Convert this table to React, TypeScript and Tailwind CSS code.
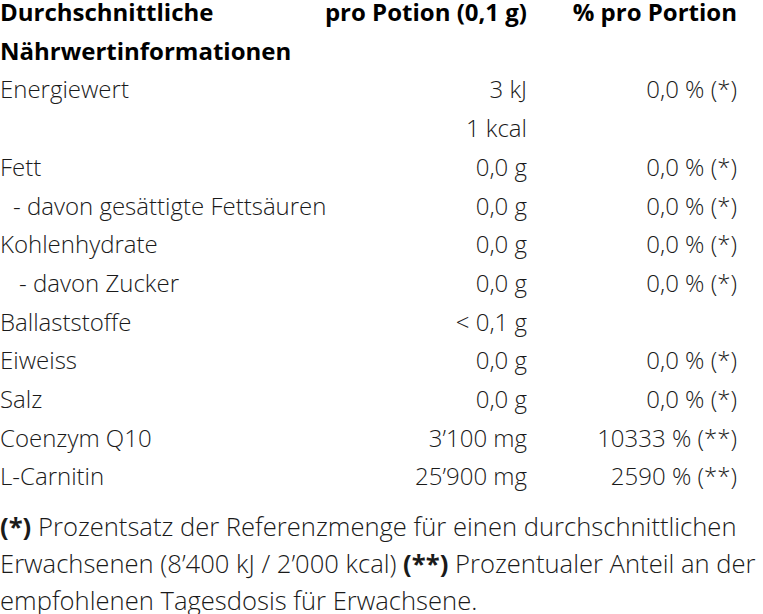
const rows: { label: string; indent?: string; amount: string; amount2?: string; pct: string }[] = [
  { label: "Energiewert", amount: "3 kJ", amount2: "1 kcal", pct: "0,0 % (*)" },
  { label: "Fett", amount: "0,0 g", pct: "0,0 % (*)" },
  { label: "- davon gesättigte Fettsäuren", indent: "pl-[13px]", amount: "0,0 g", pct: "0,0 % (*)" },
  { label: "Kohlenhydrate", amount: "0,0 g", pct: "0,0 % (*)" },
  { label: "- davon Zucker", indent: "pl-[19px]", amount: "0,0 g", pct: "0,0 % (*)" },
  { label: "Ballaststoffe", amount: "< 0,1 g", pct: "" },
  { label: "Eiweiss", amount: "0,0 g", pct: "0,0 % (*)" },
  { label: "Salz", amount: "0,0 g", pct: "0,0 % (*)" },
  { label: "Coenzym Q10", amount: "3’100 mg", pct: "10333 % (**)" },
  { label: "L-Carnitin", amount: "25’900 mg", pct: "2590 % (**)" },
]

export default function App() {
  return (
    <div className="w-[763px] h-[614px] overflow-hidden bg-white text-[#1a1a1a] font-['Open_Sans',sans-serif]">
      <div className="-mt-[7px] grid grid-cols-[330px_197px_210px] text-[24px] leading-[38.7px] font-light">
        {/* Kopfzeile */}
        <div className="font-bold text-black">Durchschnittliche Nährwertinformationen</div>
        <div className="flex justify-end font-bold text-black whitespace-nowrap">pro Potion (0,1 g)</div>
        <div className="flex justify-end font-bold text-black whitespace-nowrap">% pro Portion</div>

        {rows.map((row) => (
          <div key={row.label} className="contents">
            <div className={row.indent}>{row.label}</div>
            <div className="text-right">
              {row.amount}
              {row.amount2 && (
                <>
                  <br />
                  {row.amount2}
                </>
              )}
            </div>
            <div className="text-right">{row.pct}</div>
          </div>
        ))}
      </div>

      <p className="mt-[12px] text-[25.6px] leading-[37px] font-light">
        <strong className="font-bold">(*)</strong> Prozentsatz der Referenzmenge für einen durchschnittlichen
        Erwachsenen (8’400 kJ / 2’000 kcal) <strong className="font-bold">(**)</strong> Prozentualer Anteil an der
        empfohlenen Tagesdosis für Erwachsene.
      </p>
    </div>
  )
}
